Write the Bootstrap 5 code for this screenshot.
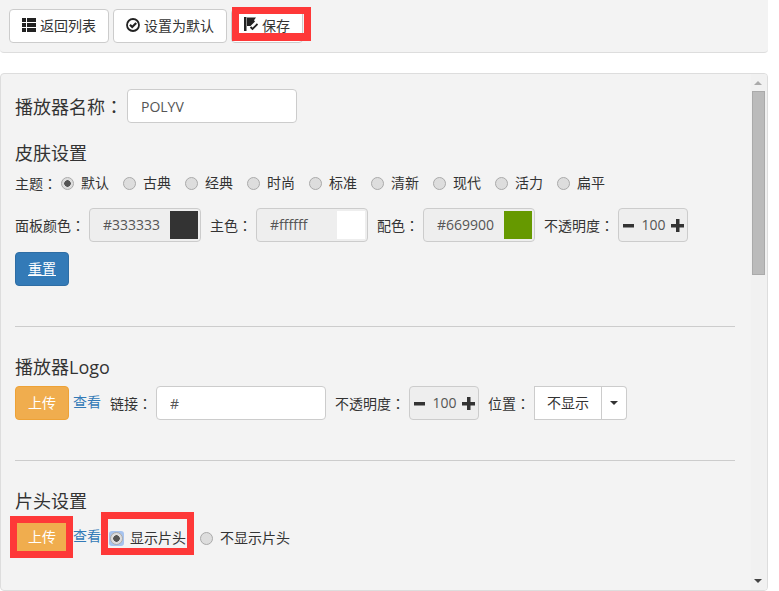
<!DOCTYPE html>
<html lang="zh-CN">
<head>
<meta charset="utf-8">
<title>播放器设置</title>
<link rel="stylesheet" href="https://cdn.jsdelivr.net/npm/bootstrap@5.3.0/dist/css/bootstrap.min.css">
<style>
html,body{height:591px;overflow:hidden}
body{background:#fff;color:#333;font:14px/20px "Open Sans","Noto Sans CJK SC",sans-serif}
.cn-colon{font-family:"Noto Sans CJK TC",sans-serif;font-feature-settings:"locl" 0}
.shell{width:768px}
.topbar{height:53px;padding:9px 9px 0;background:#f3f3f3;border-bottom:1px solid #ddd;border-radius:0 0 4px 4px}
.btn-plain{height:34px;padding:6px 12px;font-size:14px;line-height:20px;color:#333;background:#fff;border:1px solid #ccc;border-radius:4px;white-space:nowrap}
.btn-plain svg{width:14px;height:14px;margin-right:4px;vertical-align:-1px}
.btn-plain svg.ico-save{vertical-align:0}
.mainpanel{margin-top:20px;height:518px;background:#f3f3f3;border:1px solid #ddd;border-radius:4px}
.formcol{width:750px;padding:15px 0 0 14px;flex:none}
.fakebar{flex:1;background:#f1f1f1;position:relative}
.thumb{position:absolute;left:1px;top:17px;width:13px;height:184px;background:#bbb;border:1px solid #aaa}
.arrow-up,.arrow-down{position:absolute;left:3px;width:0;height:0;border-left:4px solid transparent;border-right:4px solid transparent}
.arrow-up{top:7px;border-bottom:4px solid #aaa}
.arrow-down{top:505px;border-top:4px solid #444}
.sect-title{font-size:18px;line-height:26px;font-weight:400;margin:0}
.namelabel{font-size:18px;line-height:34px}
.field{height:34px;padding:6px 13px;font-size:14px;line-height:20px;color:#555;background:#fff;border:1px solid #ccc;border-radius:4px;outline:0}
.w-name,.w-link{width:170px}
.gap4{gap:4px}
.rowh{height:34px}
.mt-title1{margin-top:17px}
.mt-title2{margin-top:27px}
.mt-theme{margin-top:7px;height:20px}
.mt-color{margin-top:15px}
.mt-reset{margin-top:10px}
.mt-row{margin-top:6px}
.pick{width:112px;height:34px;padding:2px 2px 2px 13px;background:#eee;border:1px solid #ccc;border-radius:4px;color:#555;line-height:28px}
.swatch{width:28px;height:28px}
.c-dark{background:#333}
.c-white{background:#fff}
.c-green{background:#690}
.spin{width:70px;height:34px;padding:0 3px 0 4px;background:#eee;border:1px solid #ccc;border-radius:4px;color:#555}
.spin svg{width:13px;height:13px;flex:none}
.lbl-gap{margin-left:5px}
.rd{appearance:none;-webkit-appearance:none;width:13px;height:13px;margin:0 7px 0 0;flex:none;border:1px solid #aaa;border-radius:50%;background:#ddd}
.rd:checked{background:radial-gradient(circle,#555 0 3px,#ddd 3.5px)}
.rd-ring{width:15px;height:15px;margin:0 6px 0 -1px;flex:none;background:#a6c3ef;border-radius:3px}
.rd-ring .rd{margin:0}
.rd-item{margin-right:14px}
.second-head{margin-left:10px}
.nudge-row{padding-top:2px}
.btn-blue,.btn-orange{height:34px;width:54px;padding:6px 0;font-size:14px;line-height:20px;color:#fff;border-radius:4px;border:1px solid}
.btn-blue{background:#337ab7;border-color:#2e6da4;text-decoration:underline}
.btn-orange{background:#f0ad4e;border-color:#eea236}
.linkblue{color:#337ab7;text-decoration:none;margin-bottom:3px}
.rule{width:720px;margin:40px 0 0 0;border:0;border-top:1px solid #ccc;opacity:1;height:0}
.sel-main{width:68px;height:34px;line-height:32px;text-align:center;color:#333;background:#fff;border:1px solid #ccc}
.sel-car{width:25px;height:34px;background:#fff;border:1px solid #ccc;border-left:0;border-radius:0 4px 4px 0}
.caretmark{width:0;height:0;border-left:4px solid transparent;border-right:4px solid transparent;border-top:4px solid #333}
.mark-wrap{position:relative}
.hl{position:absolute;border:7px solid #fe3838;pointer-events:none}
.hl-save{left:1px;top:-2px;width:79px;height:34px;border-width:7px 7px 8px}
.hl-up{left:-5px;top:-4px;width:63px;height:42px}
.hl-show{left:-9px;top:-14px;width:93px;height:43px}
.thead{height:34px}
</style>
</head>
<body>
<div class="shell">
  <div class="topbar d-flex gap4">
    <button class="btn-plain" type="button"><svg viewBox="0 0 14 14" fill="#222"><path d="M0 0h4v4H0zM5 0h9v4H5zM0 5h4v4H0zM5 5h9v4H5zM0 10h4v4H0zM5 10h9v4H5z"/></svg>返回列表</button>
    <button class="btn-plain" type="button"><svg viewBox="0 0 14 14" fill="none" stroke="#222"><circle cx="7" cy="7" r="6" stroke-width="1.8"/><path d="M4 6.800l2.200 2.200 4-4" stroke-width="2.200"/></svg>设置为默认</button>
    <div class="mark-wrap">
      <button class="btn-plain" type="button"><svg class="ico-save" viewBox="0 0 14 14"><path fill="#222" d="M0 0h2.500v14H0zM3 .5h9L10 3.200l1 1.300-4.500 4.500H3z"/><path fill="none" stroke="#222" stroke-width="1.800" d="M6.500 10l2 2 5-5"/></svg>保存</button>
      <span class="hl hl-save"></span>
    </div>
  </div>

  <div class="mainpanel d-flex overflow-hidden">
    <div class="formcol">
      <div class="d-flex align-items-center gap4 rowh">
        <span class="namelabel">播放器名称<span class="cn-colon" lang="zh-TW">：</span></span>
        <input class="field w-name" type="text" value="POLYV">
      </div>

      <h2 class="sect-title mt-title1">皮肤设置</h2>
      <div class="d-flex align-items-center mt-theme">
        <span class="me-1">主题<span class="cn-colon" lang="zh-TW">：</span></span>
        <label class="d-flex align-items-center rd-item"><input class="rd" type="radio" name="theme" checked>默认</label>
        <label class="d-flex align-items-center rd-item"><input class="rd" type="radio" name="theme">古典</label>
        <label class="d-flex align-items-center rd-item"><input class="rd" type="radio" name="theme">经典</label>
        <label class="d-flex align-items-center rd-item"><input class="rd" type="radio" name="theme">时尚</label>
        <label class="d-flex align-items-center rd-item"><input class="rd" type="radio" name="theme">标准</label>
        <label class="d-flex align-items-center rd-item"><input class="rd" type="radio" name="theme">清新</label>
        <label class="d-flex align-items-center rd-item"><input class="rd" type="radio" name="theme">现代</label>
        <label class="d-flex align-items-center rd-item"><input class="rd" type="radio" name="theme">活力</label>
        <label class="d-flex align-items-center rd-item"><input class="rd" type="radio" name="theme">扁平</label>
      </div>
      <div class="d-flex align-items-center gap4 mt-color">
        <span>面板颜色<span class="cn-colon" lang="zh-TW">：</span></span>
        <div class="pick d-flex justify-content-between"><span>#333333</span><span class="swatch c-dark"></span></div>
        <span class="lbl-gap">主色<span class="cn-colon" lang="zh-TW">：</span></span>
        <div class="pick d-flex justify-content-between"><span>#ffffff</span><span class="swatch c-white"></span></div>
        <span class="lbl-gap">配色<span class="cn-colon" lang="zh-TW">：</span></span>
        <div class="pick d-flex justify-content-between"><span>#669900</span><span class="swatch c-green"></span></div>
        <span class="lbl-gap">不透明度<span class="cn-colon" lang="zh-TW">：</span></span>
        <div class="spin d-flex align-items-center justify-content-between">
          <svg viewBox="0 0 13 13" fill="#333"><path d="M0 5h11v3.500H0z"/></svg><span>100</span><svg viewBox="0 0 13 13" fill="#333"><path d="M5 0h3.500v5H13v3.500H8.500V13H5V8.500H0V5h5z"/></svg>
        </div>
      </div>
      <button class="btn-blue d-block mt-reset" type="button">重置</button>
      <hr class="rule">

      <h2 class="sect-title mt-title2">播放器Logo</h2>
      <div class="d-flex align-items-center gap4 mt-row">
        <button class="btn-orange" type="button">上传</button>
        <a class="linkblue" href="#">查看</a>
        <span class="lbl-gap">链接<span class="cn-colon" lang="zh-TW">：</span></span>
        <input class="field w-link" type="text" value="#">
        <span class="lbl-gap">不透明度<span class="cn-colon" lang="zh-TW">：</span></span>
        <div class="spin d-flex align-items-center justify-content-between">
          <svg viewBox="0 0 13 13" fill="#333"><path d="M0 5h11v3.500H0z"/></svg><span>100</span><svg viewBox="0 0 13 13" fill="#333"><path d="M5 0h3.500v5H13v3.500H8.500V13H5V8.500H0V5h5z"/></svg>
        </div>
        <span class="lbl-gap">位置<span class="cn-colon" lang="zh-TW">：</span></span>
        <div class="d-flex">
          <div class="sel-main">不显示</div>
          <div class="sel-car d-flex align-items-center justify-content-center"><span class="caretmark"></span></div>
        </div>
      </div>
      <hr class="rule">

      <h2 class="sect-title mt-title2">片头设置</h2>
      <div class="d-flex align-items-center gap4 mt-row">
        <div class="mark-wrap thead">
          <button class="btn-orange" type="button">上传</button>
          <span class="hl hl-up"></span>
        </div>
        <a class="linkblue" href="#">查看</a>
        <div class="mark-wrap nudge-row d-flex align-items-center lbl-gap">
          <label class="d-flex align-items-center"><span class="rd-ring d-flex align-items-center justify-content-center"><input class="rd" type="radio" name="head" checked></span>显示片头</label>
          <span class="hl hl-show"></span>
        </div>
        <label class="nudge-row d-flex align-items-center second-head"><input class="rd" type="radio" name="head">不显示片头</label>
      </div>
    </div>
    <div class="fakebar">
      <span class="arrow-up"></span>
      <div class="thumb"></div>
      <span class="arrow-down"></span>
    </div>
  </div>
</div>
</body>
</html>
